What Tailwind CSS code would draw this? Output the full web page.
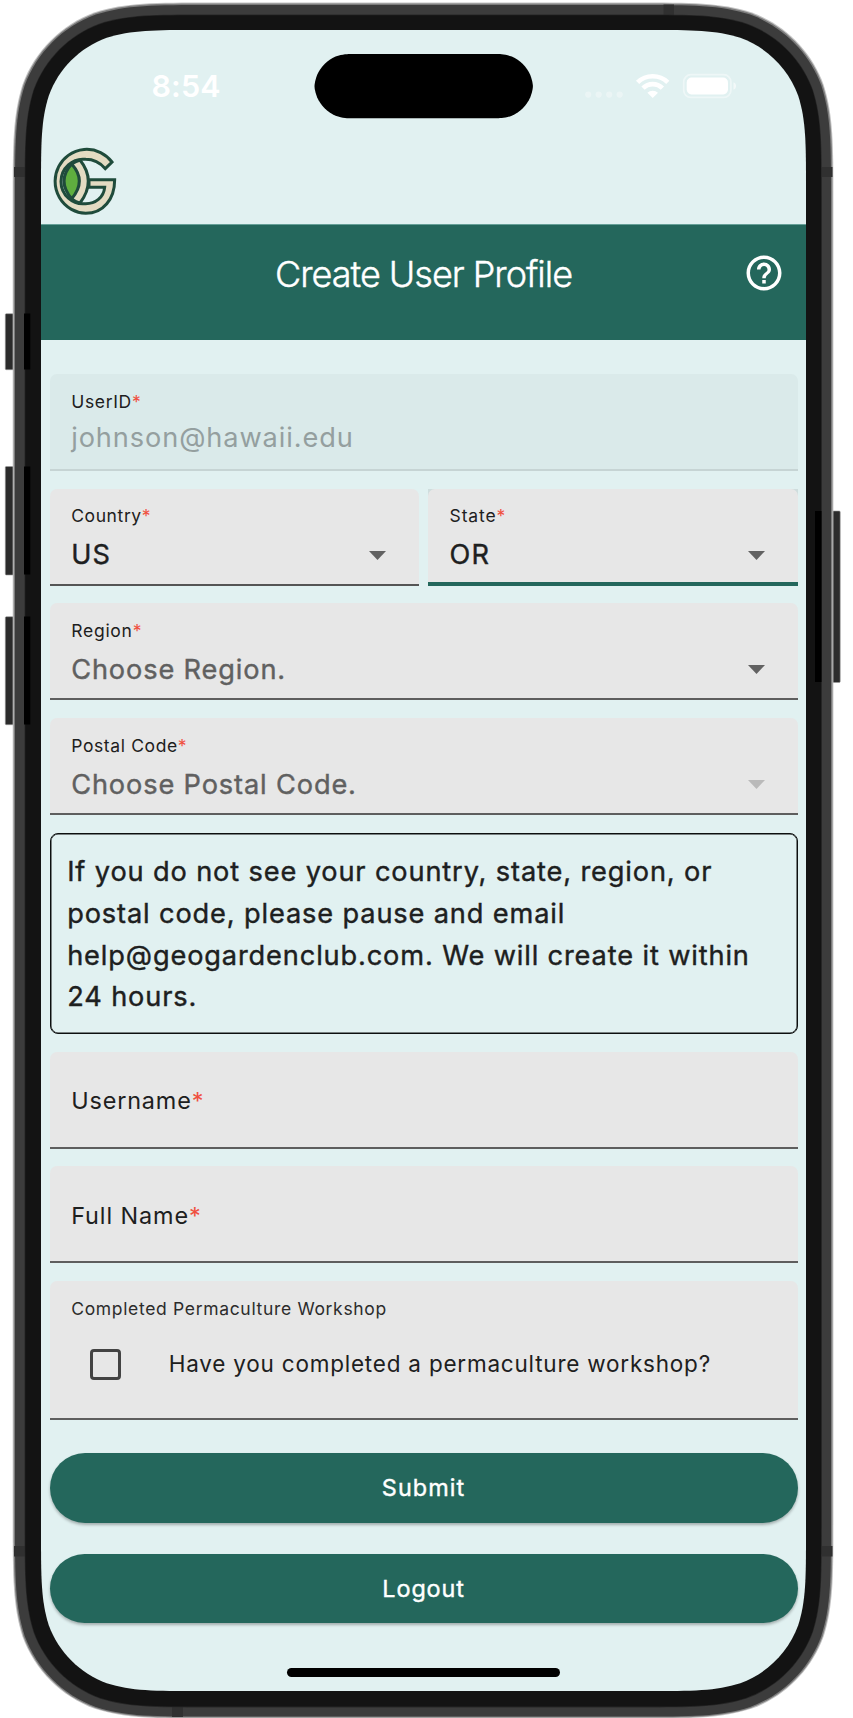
<!DOCTYPE html>
<html lang="en">
<head>
<meta charset="utf-8">
<title>Create User Profile</title>
<script src="https://cdn.jsdelivr.net/npm/@tailwindcss/browser@4"></script>
</head>
<body class="bg-white font-['Inter','Liberation_Sans',sans-serif] text-[#1d2020]">
<div class="relative w-[853px] h-[1718px] overflow-hidden">
  <!-- Device frame -->
  <svg class="absolute inset-0" width="853" height="1718" viewBox="0 0 853 1718">
    <g fill="#2b2b2b" stroke="#9a9a9a" stroke-width=".6">
      <rect x="5.3" y="313.7" width="12" height="56" rx="1"/>
      <rect x="5.3" y="466.5" width="12" height="108.500" rx="1"/>
      <rect x="5.3" y="616.7" width="12" height="108" rx="1"/>
      <rect x="828" y="511" width="12.200" height="171.500" rx="1"/>
    </g>
    <path data-box="12.700 2.600 820.700 1716 130" fill="#c4c4c4"/>
    <path data-box="13.700 3.600 818.700 1714 129" fill="#7c7c7c"/>
    <path data-box="15 5 816 1711.500 128" fill="#3c3c3c"/>
    <g fill="#303030">
      <rect x="14" y="167" width="11" height="10"/>
      <rect x="822" y="167" width="10.500" height="10"/>
      <rect x="14" y="1546" width="11" height="10.500"/>
      <rect x="822" y="1546" width="10.500" height="10.500"/>
      <rect x="663.500" y="4.500" width="10.500" height="11"/>
      <rect x="172" y="1707" width="11" height="10"/>
    </g>
    <path data-box="24.600 14.600 797.200 1692.800 119" fill="#262626"/>
    <path data-box="25.300 15.300 795.800 1691.200 118" fill="#131313"/>
    <g fill="#000">
      <rect x="24" y="313.500" width="6.300" height="56"/>
      <rect x="24" y="466.500" width="6.300" height="108"/>
      <rect x="24" y="616.500" width="6.300" height="108"/>
      <rect x="815" y="511" width="6.500" height="171"/>
    </g>
    <path data-box="41 30 765 1661 104" fill="#e1f1f1"/>
    <path data-box="314.500 54 218.400 64.300 36" data-pill fill="#000"/>
  </svg>

  <div class="relative ml-[41px] mt-[30px] w-[765px] h-[1661px] flex flex-col">
    <!-- Status bar -->
    <div class="h-[112px] flex justify-between items-start pl-[110.500px] pr-[70.500px] text-white">
      <div class="mt-[34px] leading-[44px] text-[30.500px] font-semibold tracking-[0.100px]">8:54</div>
      <svg class="mt-[38px]" width="155" height="36" viewBox="580 68 155 36" fill="#fff">
        <g opacity=".35"><circle cx="587.200" cy="94.600" r="3.100"/><circle cx="597.700" cy="94.600" r="3.100"/><circle cx="608.200" cy="94.600" r="3.100"/><circle cx="618.700" cy="94.600" r="3.100"/></g>
        <g fill="none" stroke="#fff" stroke-width="4.600">
          <path d="M636.600 82.300a21.700 21.700 0 0 1 30.200 0"/>
          <path d="M642 88.200a13.700 13.700 0 0 1 19.400 0"/>
        </g>
        <path d="M651.700 98l-5.300-5.200a7.700 7.700 0 0 1 10.600 0z"/>
        <rect x="682.700" y="74.700" width="47.200" height="22.700" rx="7.200" fill="none" stroke="#fff" stroke-opacity=".45" stroke-width="1.700"/>
        <rect x="685.700" y="77.600" width="41.300" height="16.800" rx="4.800"/>
        <path d="M732.500 82.200q2.600 1 2.600 3.800t-2.600 3.800z" opacity=".6"/>
      </svg>
    </div>
    <!-- Logo bar -->
    <div class="h-[82px] flex items-start pl-[5.500px]">
      <svg class="mt-[1px]" width="75" height="73" viewBox="21 24 225 219" fill="#e3dbc2" stroke="#1f4b3b" stroke-width="9">
        <path d="M216 81A95 96 0 1 0 137 235C190 235 224 192 224 134H147V157H194C191 188 166 206 137 206A66 67 0 1 1 137 73C162 73 181 84 196 101Z"/>
        <path d="M97 84L122 76Q168 138 122 203L97 193Z" stroke="none"/>
        <path d="M120 75Q170 138 120 204" fill="none"/>
        <path d="M95 87Q49 138 95 191Q141 138 95 87Z" fill="#5fae3f"/>
        <path d="M93 90Q106 77 126 74M93 189Q106 202 126 205" fill="none"/>
      </svg>
    </div>
    <!-- App bar -->
    <header class="relative h-[115.500px] bg-[#24675c] border-t border-[#66a098] flex justify-center text-white">
      <h1 class="mt-[23px] leading-[52px] text-[36px] font-light tracking-[-1.020px] [-webkit-text-stroke:0.4px_white]">Create User Profile</h1>
      <svg class="absolute right-[21px] top-[27px]" width="42" height="42" viewBox="0 0 24 24" fill="#fff"><path d="M11 18h2v-2h-2v2zm1-16C6.480 2 2 6.480 2 12s4.480 10 10 10 10-4.480 10-10S17.520 2 12 2zm0 18c-4.410 0-8-3.590-8-8s3.590-8 8-8 8 3.590 8 8-3.590 8-8 8zm0-14c-2.210 0-4 1.790-4 4h2c0-1.100.9-2 2-2s2 .9 2 2c0 2-3 1.750-3 5h2c0-2.250 3-2.500 3-5 0-2.210-1.790-4-4-4z"/></svg>
    </header>
    <!-- Form -->
    <main class="flex flex-col pl-[8.700px] pr-[8.500px] pt-[34.500px]">
      <div class="h-[97px] mb-[17.600px] rounded-t-[7px] bg-[#daeaea] border-b-2 border-[#c6d4d4] px-[21.500px] pt-[18px]">
        <div class="leading-[20px] text-[17.500px] tracking-[0.680px]">UserID<span class="text-[#f0503f]">*</span></div>
        <div class="mt-[9.800px] leading-[32px] text-[27.200px] tracking-[0.890px] text-[#949f9f]">johnson@hawaii.edu</div>
      </div>
      <div class="grid grid-cols-2 gap-[9px] mb-[17.600px]">
        <div class="h-[97px] rounded-t-[7px] bg-[#e7e7e7] border-b-2 border-[#555] px-[21.500px] pt-[17.500px]">
          <div class="leading-[20px] text-[17.500px] tracking-[0.600px]">Country<span class="text-[#f0503f]">*</span></div>
          <div class="mt-[13.100px] flex justify-between items-center pr-[11.500px]">
            <div class="leading-[32px] text-[27.200px] [-webkit-text-stroke:0.4px] tracking-[1px]">US</div>
            <svg width="17" height="9" viewBox="0 0 17 9" fill="#626262"><path d="M0 0h17L8.500 9z"/></svg>
          </div>
        </div>
        <div class="bg-[#cfdddd]">
          <div class="h-[97px] rounded-t-[7px] bg-[#e7e7e7] border-b-4 border-[#24675c] px-[21.500px] pt-[17.500px]">
            <div class="leading-[20px] text-[17.500px] tracking-[0.850px]">State<span class="text-[#f0503f]">*</span></div>
            <div class="mt-[13.100px] flex justify-between items-center pr-[11.500px]">
              <div class="leading-[32px] text-[27.200px] [-webkit-text-stroke:0.4px] tracking-[1px]">OR</div>
              <svg width="17" height="9" viewBox="0 0 17 9" fill="#626262"><path d="M0 0h17L8.500 9z"/></svg>
            </div>
          </div>
        </div>
      </div>
      <div class="h-[97px] mb-[17.600px] rounded-t-[7px] bg-[#e7e7e7] border-b-2 border-[#5e5e5e] px-[21.500px] pt-[18px]">
        <div class="leading-[20px] text-[17.500px] tracking-[0.750px]">Region<span class="text-[#f0503f]">*</span></div>
        <div class="mt-[12.800px] flex justify-between items-center pr-[11.500px]">
          <div class="leading-[32px] text-[27.200px] [-webkit-text-stroke:0.4px] tracking-[0.860px] text-[#606060]">Choose Region.</div>
          <svg width="17" height="9" viewBox="0 0 17 9" fill="#626262"><path d="M0 0h17L8.500 9z"/></svg>
        </div>
      </div>
      <div class="h-[97px] mb-[17.600px] rounded-t-[7px] bg-[#e7e7e7] border-b-2 border-[#5e5e5e] px-[21.500px] pt-[18px]">
        <div class="leading-[20px] text-[17.500px] tracking-[0.620px]">Postal Code<span class="text-[#f0503f]">*</span></div>
        <div class="mt-[12.900px] flex justify-between items-center pr-[11.500px]">
          <div class="leading-[32px] text-[27.200px] [-webkit-text-stroke:0.4px] tracking-[0.860px] text-[#606060]">Choose Postal Code.</div>
          <svg width="17" height="9" viewBox="0 0 17 9" fill="#bababa"><path d="M0 0h17L8.500 9z"/></svg>
        </div>
      </div>
      <div class="h-[201.600px] mt-[0.400px] mb-[17.200px] rounded-[8px] border-[1.500px] shadow-[inset_0_0_0_0.500px_#111] border-[#0c0f0f] pl-[16.500px] pt-[17.600px] leading-[41.700px] text-[27.200px] [-webkit-text-stroke:0.4px] tracking-[0.860px] whitespace-nowrap">If you do not see your country, state, region, or<br>postal code, please pause and email<br>help@geogardenclub.com. We will create it within<br>24 hours.</div>
      <div class="h-[97px] mb-[17.600px] rounded-t-[7px] bg-[#e7e7e7] border-b-2 border-[#5e5e5e] px-[21.500px] pt-[35.200px]">
        <div class="leading-[28px] text-[23.400px] tracking-[0.850px]">Username<span class="text-[#f0503f]">*</span></div>
      </div>
      <div class="h-[97px] mb-[17.600px] rounded-t-[7px] bg-[#e7e7e7] border-b-2 border-[#5e5e5e] px-[21.500px] pt-[35.600px]">
        <div class="leading-[28px] text-[23.400px] tracking-[0.900px]">Full Name<span class="text-[#f0503f]">*</span></div>
      </div>
      <div class="h-[139.400px] mb-[33px] rounded-t-[7px] bg-[#e7e7e7] border-b-2 border-[#5e5e5e] px-[21.500px] pt-[18px]">
        <div class="leading-[20px] text-[17.500px] tracking-[0.670px] text-[#2c2c2c]">Completed Permaculture Workshop</div>
        <div class="mt-[29.300px] ml-[18.500px] flex items-center gap-[48px]">
          <div class="mt-[1px] size-[31px] rounded-[4px] border-[3.500px] border-[#434343]"></div>
          <div class="leading-[28px] text-[22.500px] tracking-[0.784px]">Have you completed a permaculture workshop?</div>
        </div>
      </div>
      <button class="h-[69.500px] mb-[31.300px] rounded-full bg-[#24675c] shadow-[0_2px_3px_rgba(0,0,0,0.28)] text-white leading-[32px] text-[23.400px] [-webkit-text-stroke:0.4px] tracking-[1.100px]">Submit</button>
      <button class="h-[69.500px] rounded-full bg-[#24675c] shadow-[0_2px_3px_rgba(0,0,0,0.28)] text-white leading-[32px] text-[23.400px] [-webkit-text-stroke:0.4px] tracking-[0.900px]">Logout</button>
    </main>
    <div class="mt-auto mb-[14px] mx-auto w-[273px] h-[9px] rounded-full bg-black"></div>
  </div>
</div>
<script>
  // Rounded rectangles with continuous-curvature corners: data-box = x y w h radius
  document.querySelectorAll('path[data-box]').forEach(p => {
    const [x, y, w, h, r] = p.dataset.box.split(' ').map(Number);
    let k = [1.52866, 1.08849, .86841, .63149, .37282, .16906, .07491];
    if ('pill' in p.dataset) k = [h / 2 / r * 1.13, .95, .78, .585, .3600, .16906, .0720];
    const [a, b, c, d, e, f, g] = k.map(v => v * r);
    const R = x + w, B = y + h, m = Math.min(a, h / 2);
    p.setAttribute('d', `M${x + a} ${y}L${R - a} ${y}C${R - b} ${y} ${R - c} ${y} ${R - d} ${y + g}C${R - e} ${y + f} ${R - f} ${y + e} ${R - g} ${y + d}C${R} ${y + Math.min(c, m)} ${R} ${y + Math.min(b, m)} ${R} ${y + m}`
      + `L${R} ${B - m}C${R} ${B - Math.min(b, m)} ${R} ${B - Math.min(c, m)} ${R - g} ${B - d}C${R - f} ${B - e} ${R - e} ${B - f} ${R - d} ${B - g}C${R - c} ${B} ${R - b} ${B} ${R - a} ${B}`
      + `L${x + a} ${B}C${x + b} ${B} ${x + c} ${B} ${x + d} ${B - g}C${x + e} ${B - f} ${x + f} ${B - e} ${x + g} ${B - d}C${x} ${B - Math.min(c, m)} ${x} ${B - Math.min(b, m)} ${x} ${B - m}`
      + `L${x} ${y + m}C${x} ${y + Math.min(b, m)} ${x} ${y + Math.min(c, m)} ${x + g} ${y + d}C${x + f} ${y + e} ${x + e} ${y + f} ${x + d} ${y + g}C${x + c} ${y} ${x + b} ${y} ${x + a} ${y}Z`);
  });
</script>
</body>
</html>
